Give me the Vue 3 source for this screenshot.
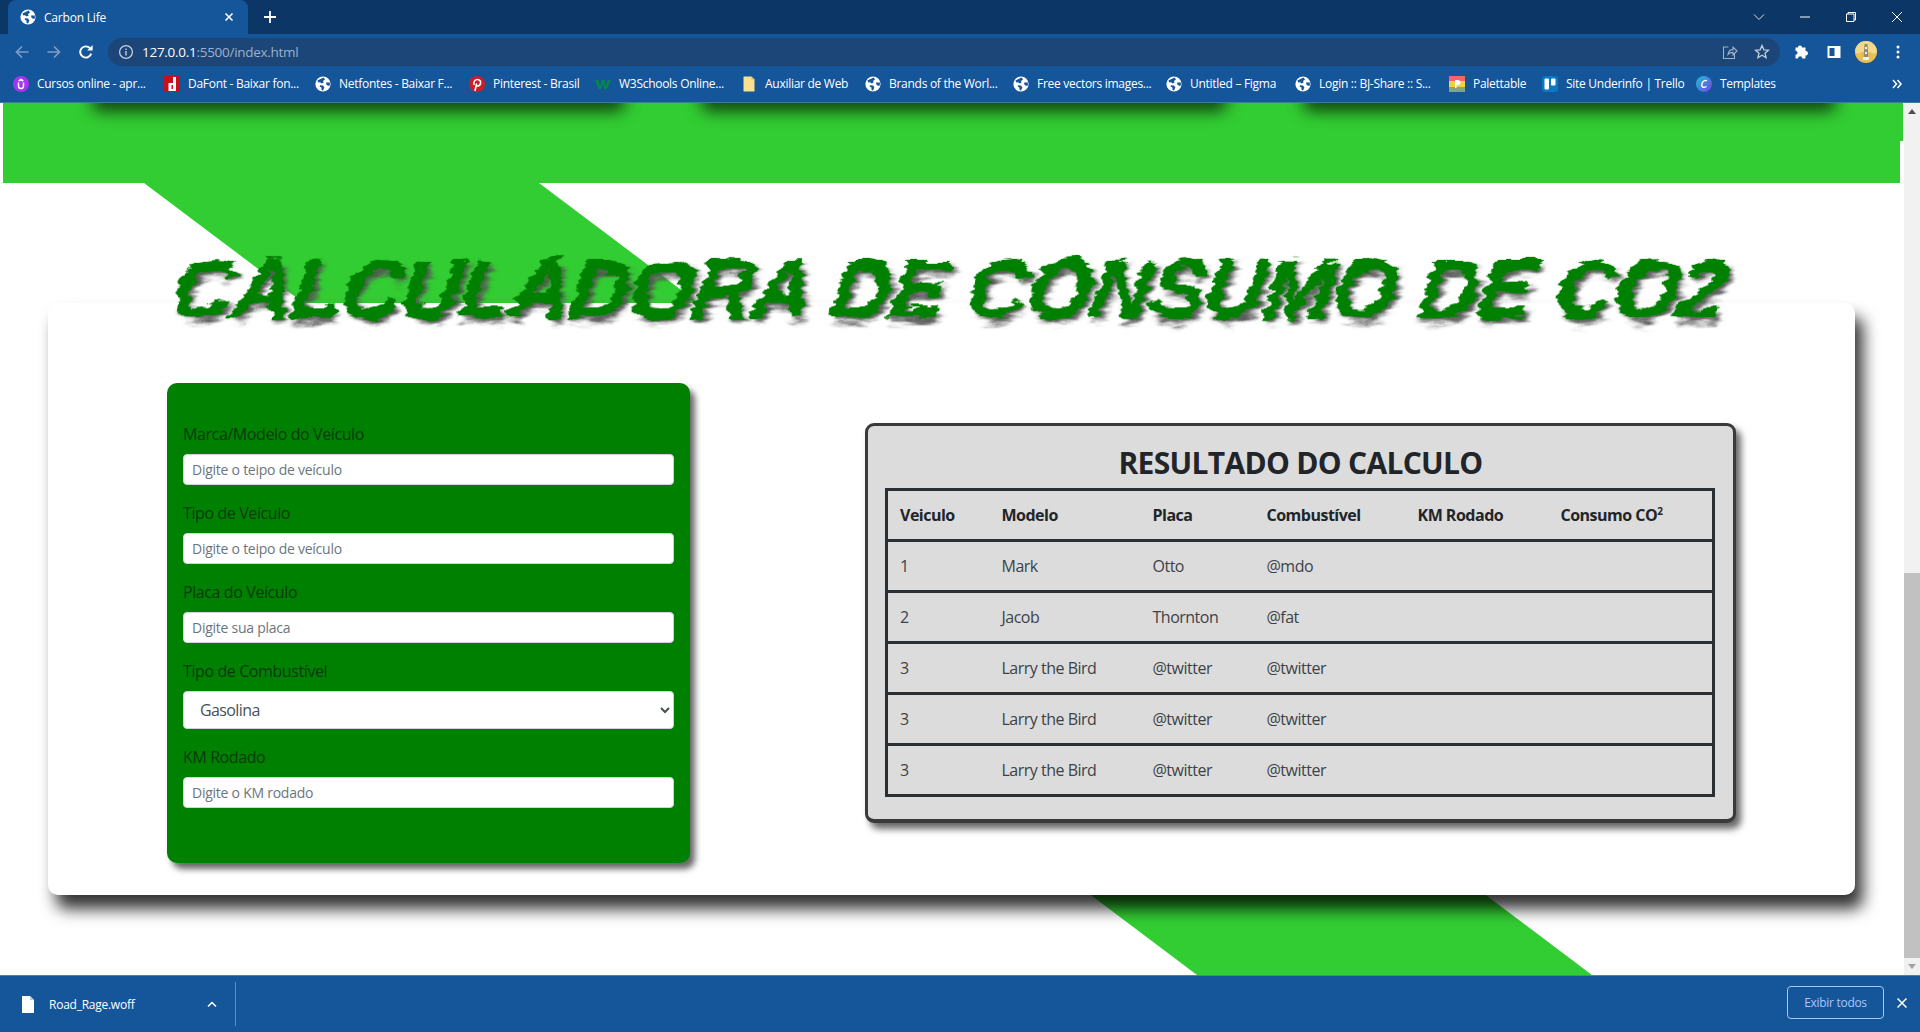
<script setup>
const bookmarks = [
  { label: "Cursos online - apr...", icon: "udemy", width: 151 },
  { label: "DaFont - Baixar fon...", icon: "dafont", width: 151 },
  { label: "Netfontes - Baixar F...", icon: "globe", width: 154 },
  { label: "Pinterest - Brasil", icon: "pinterest", width: 126 },
  { label: "W3Schools Online...", icon: "w3", width: 146 },
  { label: "Auxiliar de Web", icon: "folder", width: 124 },
  { label: "Brands of the Worl...", icon: "globe", width: 148 },
  { label: "Free vectors images...", icon: "globe", width: 153 },
  { label: "Untitled – Figma", icon: "globe", width: 129 },
  { label: "Login :: BJ-Share :: S...", icon: "globe", width: 154 },
  { label: "Palettable", icon: "palette", width: 93 },
  { label: "Site Underinfo | Trello", icon: "trello", width: 154 },
  { label: "Templates", icon: "canva", width: 100 },
];

const fields = [
  { label: "Marca/Modelo do Veículo", placeholder: "Digite o teipo de veículo" },
  { label: "Tipo de Veículo", placeholder: "Digite o teipo de veículo" },
  { label: "Placa do Veículo", placeholder: "Digite sua placa" },
];

const rows = [
  ["1", "Mark", "Otto", "@mdo"],
  ["2", "Jacob", "Thornton", "@fat"],
  ["3", "Larry the Bird", "@twitter", "@twitter"],
  ["3", "Larry the Bird", "@twitter", "@twitter"],
  ["3", "Larry the Bird", "@twitter", "@twitter"],
];
</script>

<template>
  <div class="window">
    <svg class="defs" width="0" height="0">
      <defs>
        <filter id="brush" x="-2%" y="-25%" width="104%" height="150%">
          <feTurbulence type="fractalNoise" baseFrequency="0.035 0.14" numOctaves="3" seed="11" result="noise" />
          <feDisplacementMap in="SourceGraphic" in2="noise" scale="15" xChannelSelector="R" yChannelSelector="G" />
        </filter>
        <linearGradient id="canvaFill" x1="0" y1="0" x2="1" y2="1">
          <stop offset="0" stop-color="#19c3d6" />
          <stop offset="1" stop-color="#7a3fe0" />
        </linearGradient>
        <symbol id="globe" viewBox="0 0 16 16">
          <circle cx="8" cy="8" r="7.6" fill="#fff" />
          <path d="M2.4 4.6 5 3.2 8.600 1.400 10 3.400 8 5 8.600 6.600 6.800 7.400 5 6.200 3.400 6.600ZM5 9.200 8 9.600 9.400 11.400 8 14.600 6.600 14 6.400 11.600 4.600 10.600ZM11 6.400 15 6.600 14.600 10 12.600 9.600 11.400 8.400Z" fill="#15559a" />
        </symbol>
      </defs>
    </svg>

    <header class="browser">
      <div class="tabs">
        <div class="tab">
          <svg class="ico16" viewBox="0 0 16 16"><use href="#globe" /></svg>
          <span class="tab-title">Carbon Life</span>
          <svg class="tab-close" viewBox="0 0 10 10"><path d="M1.500 1.500l7 7M8.500 1.500l-7 7" stroke="#fff" stroke-width="1.600" /></svg>
        </div>
        <svg class="new-tab" viewBox="0 0 12 12"><path d="M6 0v12M0 6h12" stroke="#fff" stroke-width="1.800" /></svg>
        <div class="win-controls">
          <span class="win-btn"><svg width="14" height="14" viewBox="0 0 14 14"><path d="M2 4.500l5 5 5-5" fill="none" stroke="#d5deea" stroke-width="1" /></svg></span>
          <span class="win-btn"><svg width="12" height="12" viewBox="0 0 12 12"><path d="M1 6h10" stroke="#fff" stroke-width="1" /></svg></span>
          <span class="win-btn"><svg width="12" height="12" viewBox="0 0 12 12"><path d="M3 3V1.500h7.500V9H9M1.500 3H9v7.500H1.500Z" fill="none" stroke="#fff" stroke-width="1" /></svg></span>
          <span class="win-btn"><svg width="12" height="12" viewBox="0 0 12 12"><path d="M1 1l10 10M11 1L1 11" stroke="#fff" stroke-width="1" /></svg></span>
        </div>
      </div>

      <div class="toolbar">
        <span class="tool"><svg width="16" height="16" viewBox="0 0 16 16"><path d="M14.500 8H2.500M8 2.500L2.500 8 8 13.500" fill="none" stroke="#7f9dc4" stroke-width="1.700" /></svg></span>
        <span class="tool"><svg width="16" height="16" viewBox="0 0 16 16"><path d="M1.500 8h12M8 2.500L13.500 8 8 13.500" fill="none" stroke="#7f9dc4" stroke-width="1.700" /></svg></span>
        <span class="tool"><svg width="16" height="16" viewBox="0 0 16 16"><path d="M13.200 9.600A5.600 5.600 0 1 1 12 4.200" fill="none" stroke="#fff" stroke-width="1.900" /><path d="M9.200 6.400h5.400V1Z" fill="#fff" /></svg></span>
        <div class="omnibox">
          <svg class="ico16" viewBox="0 0 16 16"><circle cx="8" cy="8" r="6.400" fill="none" stroke="#c3cfdf" stroke-width="1.300" /><path d="M8 7v4.400M8 4.400v1.500" stroke="#c3cfdf" stroke-width="1.400" /></svg>
          <span class="url"><span class="url-host">127.0.0.1</span>:5500/index.html</span>
          <span class="omni-right">
            <svg width="16" height="16" viewBox="0 0 16 16"><path d="M6.500 3H1.500v11.500h11V10M6 10.500C6.500 7 9 5.600 11 5.600V3l4 4-4 4V8.400C9 8.400 7.300 9 6 10.500Z" fill="none" stroke="#9db1cb" stroke-width="1.100" /></svg>
            <svg width="16" height="16" viewBox="0 0 16 16"><path d="M8 1.500l1.900 4.300 4.600.4-3.500 3 1.100 4.500L8 11.300l-4.100 2.400L5 9.200l-3.500-3 4.600-.4Z" fill="none" stroke="#c3cfdf" stroke-width="1.300" /></svg>
          </span>
        </div>
        <span class="tool first-ext"><svg width="16" height="16" viewBox="0 0 16 16"><path d="M6 1.500c1.300 0 2 .8 2 2h3.500V7c1.200 0 2.500.6 2.500 2.200s-1.300 2.300-2.500 2.300v3H8.300c0-1.300-.8-2.300-2.100-2.300s-2.200 1-2.200 2.300H1.500V10.800c1.200 0 2-.9 2-2S2.700 6.700 1.500 6.700V3.500H4c0-1.200.7-2 2-2Z" fill="#fff" /></svg></span>
        <span class="tool"><svg width="16" height="16" viewBox="0 0 16 16"><path d="M1.500 2h13v12h-13ZM3.500 4v8h5V4Z" fill="#fff" fill-rule="evenodd" /></svg></span>
        <span class="tool"><svg width="22" height="22" viewBox="0 0 22 22"><circle cx="11" cy="11" r="11" fill="#e9c04f" /><path d="M0 11a11 11 0 0 1 22 0c-3 3-5 1-7 0H7c-2 1-4 3-7 0Z" fill="#f0d98a" /><path d="M9.500 3h3l1 16h-5Z" fill="#8e8a7c" /><path d="M10 6h2v2h-2ZM10 11h2v2h-2ZM8 16h6v3H8Z" fill="#f4f1e6" /></svg></span>
        <span class="tool"><svg width="4" height="14" viewBox="0 0 4 14"><circle cx="2" cy="2" r="1.500" fill="#fff" /><circle cx="2" cy="7" r="1.500" fill="#fff" /><circle cx="2" cy="12" r="1.500" fill="#fff" /></svg></span>
      </div>

      <div class="bookmarks">
        <div v-for="b in bookmarks" :key="b.label" class="bookmark" :style="{ width: b.width + 'px' }">
          <svg class="ico16" viewBox="0 0 16 16">
            <use v-if="b.icon === 'globe'" href="#globe" />
            <template v-else-if="b.icon === 'udemy'">
              <circle cx="8" cy="8" r="8" fill="#a435f0" />
              <path d="M5.500 6.500v3.600a2.500 2.500 0 0 0 5 0V6.500M5.700 5L8 3.500 10.300 5" fill="none" stroke="#fff" stroke-width="1.500" />
            </template>
            <template v-else-if="b.icon === 'dafont'">
              <rect width="16" height="16" fill="#c8101c" />
              <path d="M9 1h3v14H9V9H7.500v4H9v2H4.500V7H9Z" fill="#fff" />
            </template>
            <template v-else-if="b.icon === 'pinterest'">
              <circle cx="8" cy="8" r="8" fill="#cb1f27" />
              <path d="M6 15l1.600-7.500M5.200 9C4 6 6 3.500 8.400 3.500c2.600 0 3.600 2 3.100 4-.5 2.100-2.500 3.200-4.200 2" fill="none" stroke="#fff" stroke-width="1.600" />
            </template>
            <path v-else-if="b.icon === 'w3'" d="M0 4h3.500L5 10l2-6h2.500l1.500 6 1.500-6H16l-4 9H9.500L8 8l-2 5H3.500Z" fill="#04864c" />
            <template v-else-if="b.icon === 'folder'">
              <path d="M2.500 .5h8l3 3v12h-11Z" fill="#f8e08e" />
              <path d="M10.500 .5l3 3h-3Z" fill="#d7b84f" />
            </template>
            <template v-else-if="b.icon === 'palette'">
              <rect width="16" height="5" fill="#f0685f" />
              <rect y="5" width="16" height="6" fill="#f4d03f" />
              <rect y="11" width="16" height="5" fill="#7fa68c" />
              <path d="M6 12V4h3a2 2 0 0 1 0 5H7.500v3Z" fill="#fff" />
            </template>
            <template v-else-if="b.icon === 'trello'">
              <rect width="16" height="16" rx="3" fill="#0b79bf" />
              <rect x="2.500" y="2.500" width="4.500" height="11" rx="1" fill="#fff" />
              <rect x="9" y="2.500" width="4.500" height="7" rx="1" fill="#fff" />
            </template>
            <template v-else-if="b.icon === 'canva'">
              <circle cx="8" cy="8" r="8" fill="url(#canvaFill)" />
              <path d="M10.800 5.200C10 3.800 7 4.500 6 7.500s.8 5 4.600 3" fill="none" stroke="#fff" stroke-width="1.400" />
            </template>
          </svg>
          <span class="bookmark-label">{{ b.label }}</span>
        </div>
        <svg class="more" width="10" height="10" viewBox="0 0 10 10"><path d="M1 1l3.500 4L1 9M5.500 1L9 5 5.500 9" fill="none" stroke="#fff" stroke-width="1.500" /></svg>
      </div>
    </header>

    <div class="viewport">
      <main class="page">
        <div class="strip"></div>

        <section class="band">
          <div class="band-top">
            <div class="ghost ghost-a"></div>
            <div class="ghost ghost-b"></div>
            <div class="ghost ghost-c"></div>
          </div>
        </section>

        <section class="calc">
          <h1 class="calc-title">CALCULADORA DE CONSUMO DE CO2</h1>
          <div class="card">
            <form class="form-panel" @submit.prevent>
              <div v-for="f in fields" :key="f.label" class="field">
                <label>{{ f.label }}</label>
                <input type="text" :placeholder="f.placeholder" />
              </div>
              <div class="field">
                <label>Tipo de Combustível</label>
                <select>
                  <option>Gasolina</option>
                  <option>Etanol</option>
                  <option>Diesel</option>
                </select>
              </div>
              <div class="field">
                <label>KM Rodado</label>
                <input type="text" placeholder="Digite o KM rodado" />
              </div>
            </form>

            <div class="result">
              <h2>RESULTADO DO CALCULO</h2>
              <table>
                <colgroup>
                  <col style="width: 102px" />
                  <col style="width: 151px" />
                  <col style="width: 114px" />
                  <col style="width: 151px" />
                  <col style="width: 143px" />
                  <col />
                </colgroup>
                <thead>
                  <tr>
                    <th>Veiculo</th>
                    <th>Modelo</th>
                    <th>Placa</th>
                    <th>Combustível</th>
                    <th>KM Rodado</th>
                    <th>Consumo CO<sup>2</sup></th>
                  </tr>
                </thead>
                <tbody>
                  <tr v-for="(r, i) in rows" :key="i">
                    <td v-for="(c, j) in r" :key="j">{{ c }}</td>
                    <td></td>
                    <td></td>
                  </tr>
                </tbody>
              </table>
            </div>
          </div>
        </section>
      </main>

      <aside class="scrollbar">
        <span class="arrow-up"></span>
        <div class="track"><div class="thumb"></div></div>
        <span class="arrow-down"></span>
      </aside>
    </div>

    <footer class="downloads">
      <svg class="file" width="14" height="17" viewBox="0 0 14 17"><path d="M1 0h8l4 4v13H1Z" fill="#fff" /><path d="M9 0l4 4H9Z" fill="#b8c8dc" /></svg>
      <span class="file-name">Road_Rage.woff</span>
      <svg class="caret" width="12" height="8" viewBox="0 0 12 8"><path d="M2 6.500l4-4 4 4" fill="none" stroke="#fff" stroke-width="1.500" /></svg>
      <span class="sep"></span>
      <button class="show-all">Exibir todos</button>
      <svg class="dl-close" width="10" height="10" viewBox="0 0 10 10"><path d="M.5.500l9 9M9.500.500l-9 9" stroke="#fff" stroke-width="1.500" /></svg>
    </footer>
  </div>
</template>

<style scoped>
.defs {
  position: absolute;
}

.window {
  width: 1920px;
  height: 1032px;
  display: flex;
  flex-direction: column;
  overflow: hidden;
  background: #fff;
  font-family: "Open Sans", "Noto Sans", sans-serif;
  color: #212529;
}

.ico16 {
  width: 16px;
  height: 16px;
  flex: none;
}

/* browser chrome */
.browser {
  flex: none;
  position: relative;
  z-index: 5;
  background: #15559a;
  border-bottom: 1px solid #3b7f96;
}

.tabs {
  height: 34px;
  display: flex;
  align-items: center;
  background: #0c3666;
  padding-left: 8px;
}

.tab {
  width: 240px;
  height: 34px;
  box-sizing: border-box;
  display: flex;
  align-items: center;
  padding: 0 12px;
  background: #15559a;
  border-radius: 8px 8px 0 0;
}

.tab-title {
  margin-left: 8px;
  font-size: 12px;
  color: #fff;
  letter-spacing: -0.2px;
}

.tab-close {
  width: 10px;
  height: 10px;
  margin-left: auto;
  margin-right: 2px;
}

.new-tab {
  width: 12px;
  height: 12px;
  margin-left: 16px;
}

.win-controls {
  margin-left: auto;
  display: flex;
}

.win-btn {
  width: 46px;
  height: 28px;
  display: flex;
  align-items: center;
  justify-content: center;
}

.toolbar {
  height: 32px;
  display: flex;
  padding: 0 6px;
  align-items: flex-start;
}

.tool {
  width: 32px;
  height: 32px;
  flex: none;
  display: flex;
  align-items: center;
  justify-content: center;
  margin-top: 2px;
}

.omnibox {
  flex: 1;
  height: 28px;
  margin: 4px 6px 0;
  border-radius: 14px;
  background: #1c4678;
  display: flex;
  align-items: center;
  padding: 0 9px 0 10px;
}

.url {
  margin-left: 8px;
  font-size: 13.5px;
  color: #9db1cb;
  letter-spacing: -0.28px;
}

.url-host {
  color: #fff;
}

.omni-right {
  margin-left: auto;
  display: flex;
  gap: 16px;
  padding-right: 1px;
}

.bookmarks {
  height: 36px;
  display: flex;
  align-items: center;
  padding: 0 0 1px 13px;
  box-sizing: border-box;
}

.bookmark {
  display: flex;
  align-items: center;
  gap: 8px;
  flex: none;
  white-space: nowrap;
}

.bookmark-label {
  font-size: 12px;
  color: #fff;
  letter-spacing: -0.28px;
}

.more {
  margin-left: auto;
  margin-right: 18px;
}

/* page */
.viewport {
  flex: 1;
  min-height: 0;
  display: flex;
}

.page {
  flex: 1;
  position: relative;
  overflow: hidden;
}

.strip {
  position: absolute;
  inset: 0;
  background: #32cd32;
  clip-path: polygon(144px 80px, 539px 80px, 1592px 872px, 1197px 872px);
}

.band {
  position: relative;
  margin: 0 4px 0 3px;
  height: 80px;
  background: #32cd32;
}

.band-top {
  height: 38px;
  margin-right: -3px;
  background: #32cd32;
  overflow: hidden;
  position: relative;
  display: flex;
}

.ghost {
  height: 20px;
  margin-top: -26px;
  border-radius: 10px;
  box-shadow: 8px 14px 16px rgba(0, 0, 0, 0.7);
  flex: none;
}

.ghost-a {
  width: 535px;
  margin-left: 80px;
}

.ghost-b {
  width: 528px;
  margin-left: 74px;
}

.ghost-c {
  width: 535px;
  margin-left: 74px;
}

.calc {
  position: relative;
  padding: 120px 48px 0;
}

.calc-title {
  position: absolute;
  left: 0;
  right: 4px;
  top: 61px;
  z-index: 2;
  margin: 0;
  text-align: center;
  font-family: "Liberation Sans", sans-serif;
  font-size: 82px;
  line-height: 90px;
  font-weight: 700;
  font-style: italic;
  color: #008000;
  -webkit-text-stroke: 1.5px #008000;
  text-shadow: 4px 5px 5px #555;
  filter: url(#brush);
  transform: skewX(-8deg);
  white-space: nowrap;
}

.card {
  width: 1807px;
  height: 592px;
  box-sizing: border-box;
  display: flex;
  align-items: flex-start;
  background: #fff;
  border-radius: 10px;
  box-shadow: 8px 14px 16px rgba(0, 0, 0, 0.8);
  padding: 80px 0 0 119px;
}

.form-panel {
  width: 523px;
  height: 480px;
  box-sizing: border-box;
  padding: 39px 16px 0;
  background: #008000;
  border-radius: 10px;
  box-shadow: 5px 6px 6px rgba(0, 0, 0, 0.6);
}

.field {
  margin-bottom: 16px;
}

.field label {
  display: block;
  font-size: 16px;
  line-height: 24px;
  margin-bottom: 8px;
  letter-spacing: -0.4px;
  color: #0a3a0d;
}

.field input,
.field select {
  display: block;
  width: 100%;
  box-sizing: border-box;
  background: #fff;
  border: 1px solid #ced4da;
  border-radius: 4px;
  font-family: inherit;
}

.field input {
  height: 31px;
  padding: 4px 8px;
  font-size: 14px;
  letter-spacing: -0.25px;
}

.field input::placeholder {
  color: #6c757d;
  opacity: 1;
}

.field select {
  height: 38px;
  padding: 6px 12px;
  font-size: 16px;
  letter-spacing: -0.6px;
  color: #495057;
}

.result {
  width: 871px;
  height: 400px;
  box-sizing: border-box;
  margin: 40px 0 0 175px;
  padding: 0 0 0 17px;
  background: #dcdcdc;
  border: 3px solid #3a3a3a;
  border-bottom-width: 4px;
  border-radius: 9px;
  box-shadow: 5px 6px 7px rgba(0, 0, 0, 0.6);
}

.result h2 {
  margin: 0 17px 0 0;
  height: 62px;
  line-height: 74px;
  text-align: center;
  font-size: 30px;
  font-weight: 700;
  letter-spacing: -0.7px;
}

table {
  width: 830px;
  table-layout: fixed;
  border-collapse: collapse;
  border: 3px solid #2b2f33;
  font-size: 16px;
}

tr {
  height: 51px;
  border-bottom: 3px solid #2b2f33;
}

th,
td {
  padding: 0 0 0 13px;
  text-align: left;
  white-space: nowrap;
  letter-spacing: -0.5px;
}

th:first-child,
td:first-child {
  padding-left: 12px;
}

th {
  font-weight: 700;
}

td {
  color: #3c4248;
}

sup {
  font-size: 10px;
  line-height: 0;
}

.scrollbar {
  width: 16px;
  flex: none;
  background: #f1f1f1;
  display: flex;
  flex-direction: column;
  align-items: center;
  position: relative;
  z-index: 3;
}

.arrow-up,
.arrow-down {
  width: 0;
  height: 0;
  margin: 6px 0;
  border-left: 4px solid transparent;
  border-right: 4px solid transparent;
}

.arrow-up {
  border-bottom: 5px solid #505050;
}

.arrow-down {
  border-top: 5px solid #a3a3a3;
}

.track {
  flex: 1;
  width: 100%;
  display: flex;
  align-items: flex-end;
}

.thumb {
  width: 100%;
  height: 385px;
  background: #c1c1c1;
}

/* download bar */
.downloads {
  flex: none;
  height: 57px;
  box-sizing: border-box;
  border-top: 1px solid #4c7fb4;
  background: #15559a;
  display: flex;
  align-items: center;
  padding-left: 21px;
  position: relative;
  z-index: 5;
}

.file-name {
  margin-left: 14px;
  font-size: 12px;
  color: #fff;
  letter-spacing: -0.25px;
}

.caret {
  margin-left: 72px;
}

.sep {
  width: 1px;
  height: 44px;
  margin-left: 17px;
  background: #5d8bbd;
}

.show-all {
  margin-left: auto;
  width: 97px;
  height: 33px;
  margin-bottom: 3px;
  border: 1px solid #a8c7fa;
  border-radius: 4px;
  background: transparent;
  color: #a8c7fa;
  font-family: inherit;
  font-size: 12px;
  letter-spacing: -0.3px;
}

.dl-close {
  margin: 0 13px 3px 13px;
}
</style>

<style>
html,
body {
  margin: 0;
  overflow: hidden;
}
</style>
